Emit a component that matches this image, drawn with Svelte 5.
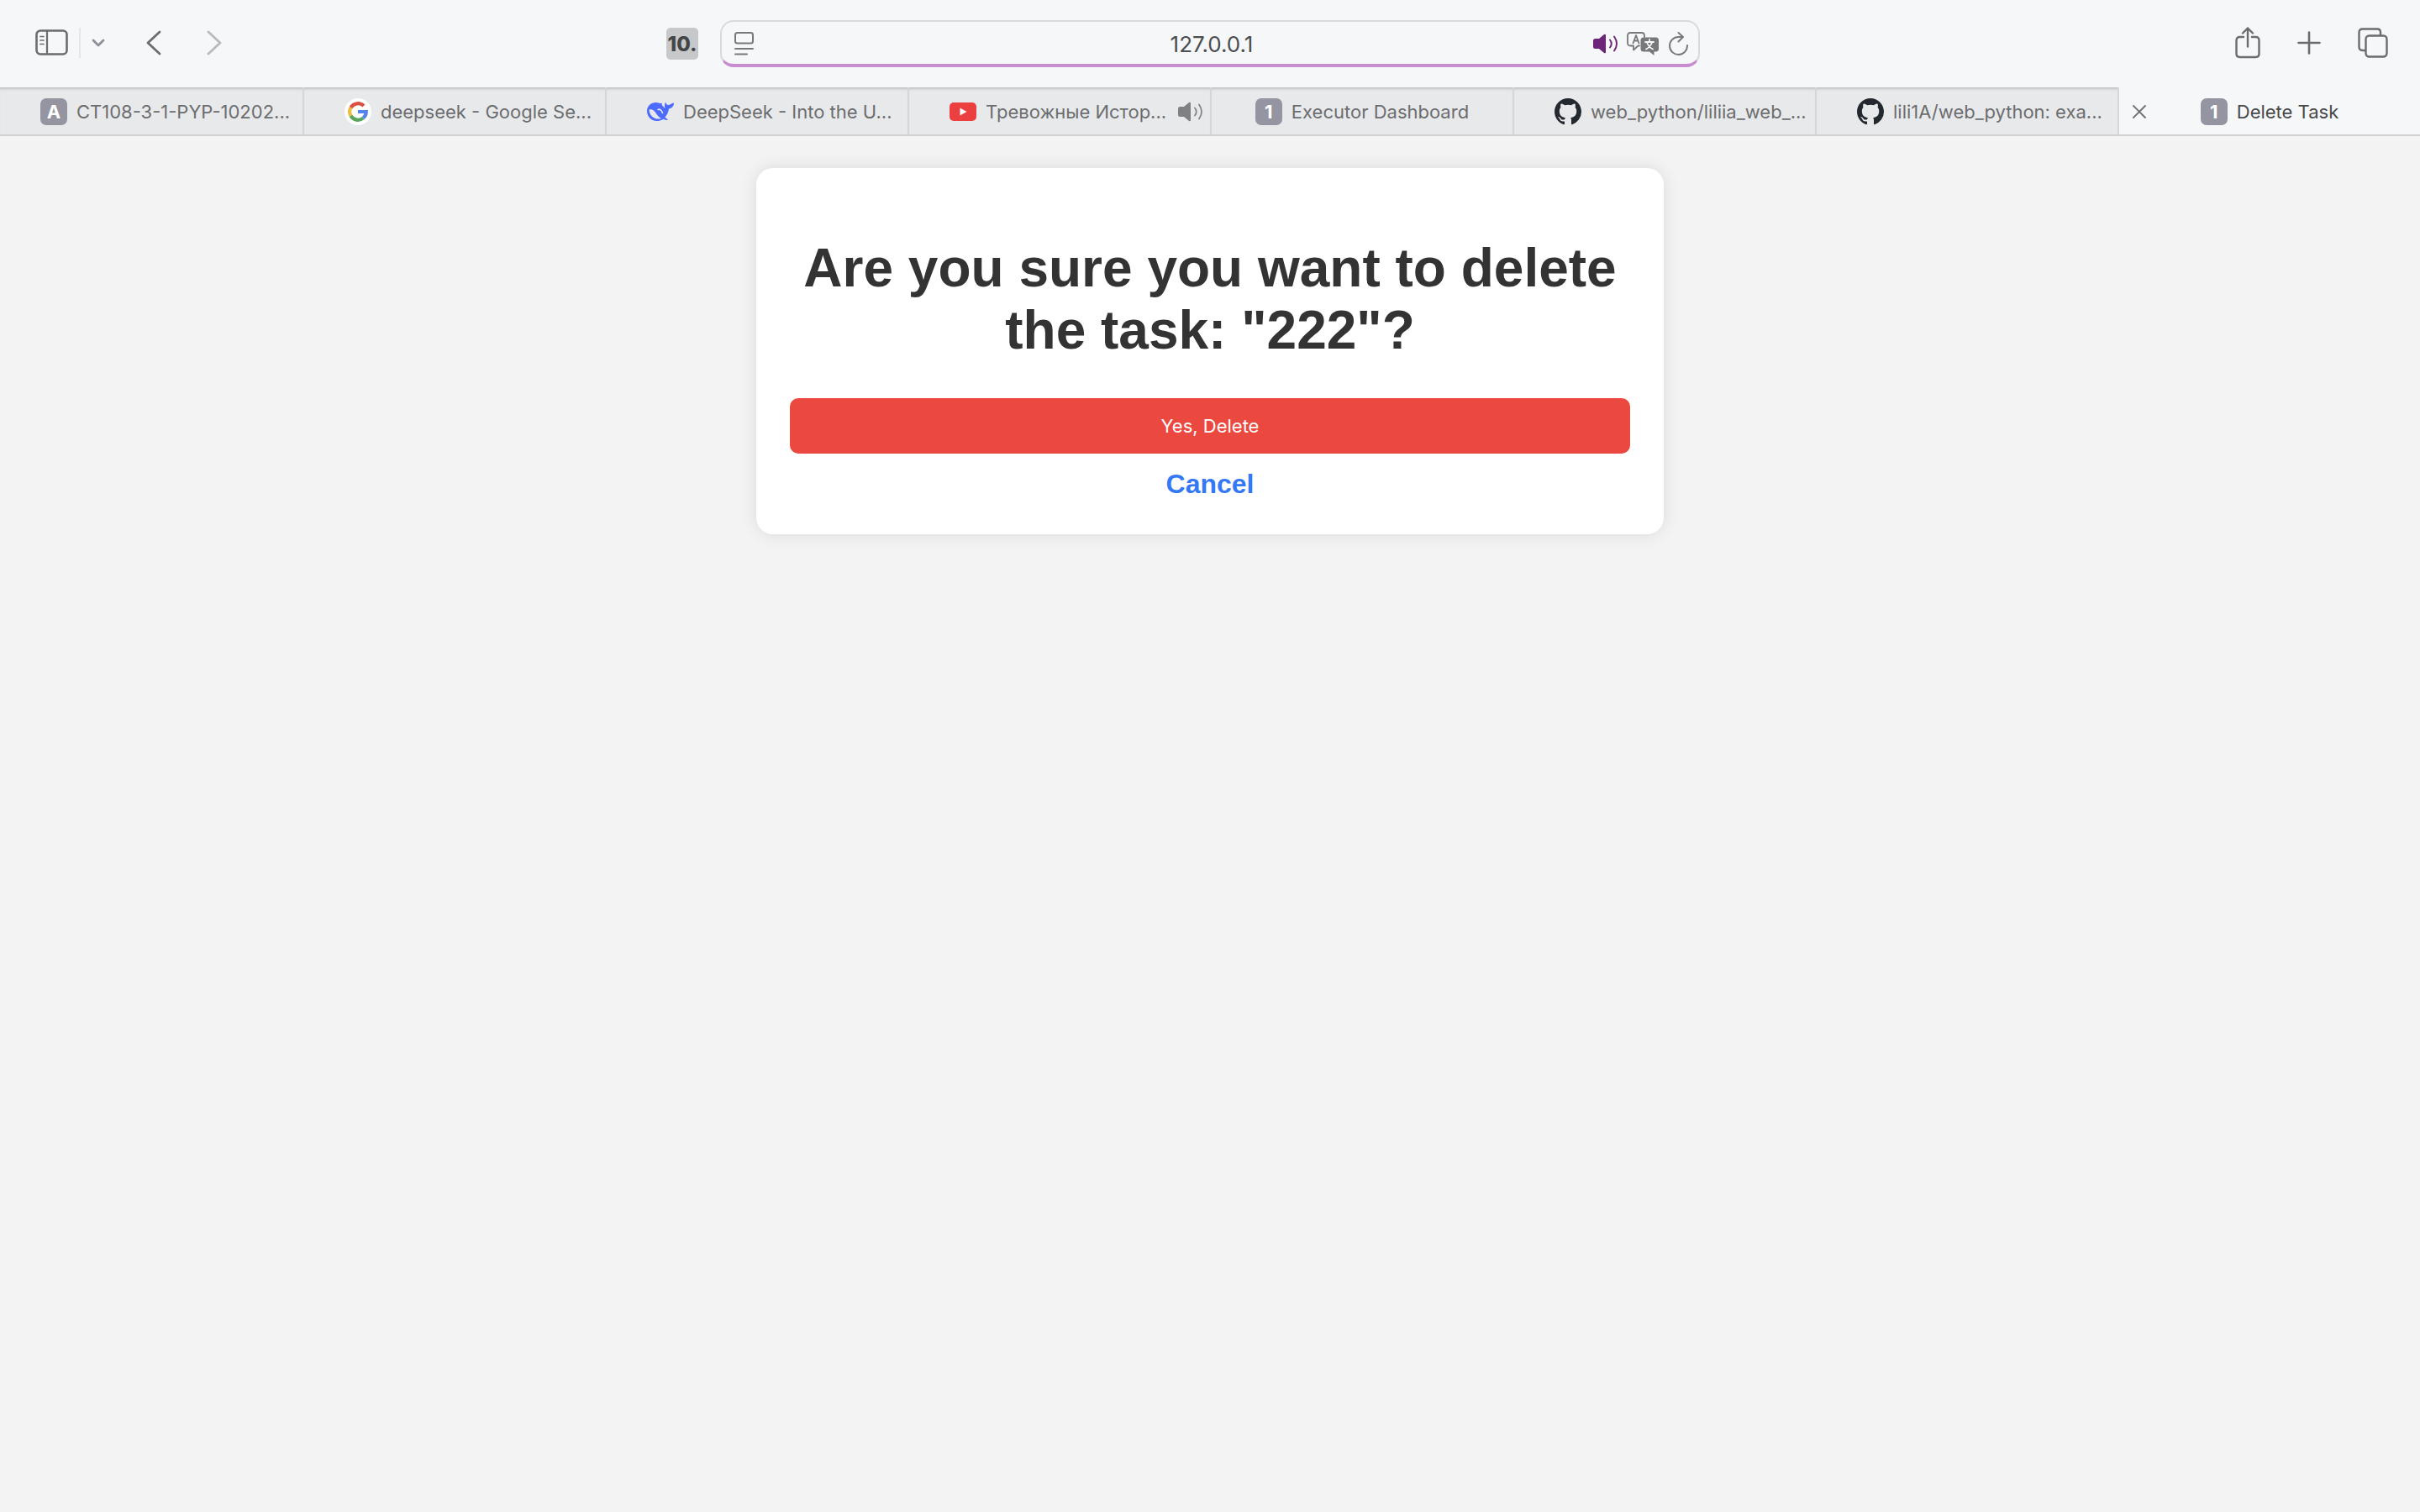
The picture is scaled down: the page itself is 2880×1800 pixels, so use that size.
<script>
  const tabs = [
    { icon: 'letter', letter: 'A', title: 'CT108-3-1-PYP-10202...', long: true },
    { icon: 'google', title: 'deepseek - Google Se...', long: true },
    { icon: 'whale', title: 'DeepSeek - Into the U...', long: true },
    { icon: 'video', title: 'Тревожные Истор...', long: true, audio: true },
    { icon: 'letter', letter: '1', title: 'Executor Dashboard' },
    { icon: 'github', title: 'web_python/liliia_web_...', long: true },
    { icon: 'github', title: 'lili1A/web_python: exa...', long: true },
    { icon: 'letter', letter: '1', title: 'Delete Task', active: true }
  ];
</script>

<header class="toolbar">
  <div class="side left">
    <button class="tool sidebar" aria-label="Show sidebar">
      <svg width="40" height="32" viewBox="0 0 40 32" fill="none" stroke="currentColor" stroke-width="2.6" stroke-linecap="round">
        <rect x="1.5" y="1.5" width="36" height="28" rx="4.5" />
        <path d="M14 2v27" stroke-width="2.2" />
        <path d="M6 8.500h4M6 13h4M6 17.500h4" stroke-width="1.700" />
      </svg>
    </button>
    <span class="rule"></span>
    <button class="tool menu" aria-label="Tab groups">
      <svg width="16" height="12" viewBox="0 0 16 12" fill="none" stroke="currentColor" stroke-width="2.800" stroke-linecap="round" stroke-linejoin="round"><path d="M2 3l6 6 6-6" /></svg>
    </button>
    <button class="tool back" aria-label="Back">
      <svg width="18" height="30" viewBox="0 0 18 30" fill="none" stroke="currentColor" stroke-width="2.800" stroke-linecap="round" stroke-linejoin="round"><path d="M16 2L2 15l14 13" /></svg>
    </button>
    <button class="tool forward" aria-label="Forward">
      <svg width="18" height="30" viewBox="0 0 18 30" fill="none" stroke="currentColor" stroke-width="2.800" stroke-linecap="round" stroke-linejoin="round"><path d="M2 2l14 13L2 28" /></svg>
    </button>
  </div>

  <div class="middle">
    <button class="extension" aria-label="Extension">10.</button>
    <div class="address">
      <button class="tool" aria-label="Page settings">
        <svg width="24" height="28" viewBox="0 0 24 28" fill="none" stroke="#77787a" stroke-width="2" stroke-linecap="round">
          <rect x="1" y="1" width="21" height="12.500" rx="2.500" />
          <path d="M1 20h21M1 26.500h14" />
        </svg>
      </button>
      <input class="url" aria-label="Address" value="127.0.0.1" />
      <button class="tool" aria-label="Mute this tab">
        <svg width="29" height="24" viewBox="0 0 29 24" fill="none" stroke="#6e2478" stroke-width="1.900" stroke-linecap="round">
          <path d="M0 8.500Q0 6 2.500 6H7l6-5Q15 0 15 2v20q0 2-2 1l-6-5H2.500Q0 18 0 15.500z" fill="#6e2478" stroke="none" />
          <path d="M20 7.500q3.500 4.500 0 9M25 3.500q6 8.500 0 17" />
        </svg>
      </button>
      <button class="tool translate" aria-label="Translate">
        <svg width="39" height="29" viewBox="0 0 39 29" fill="none" stroke="#77787a" stroke-width="1.800" stroke-linejoin="round" stroke-linecap="round">
          <path d="M15 16.500h-1.500L8 21.500v-5H4.500Q1 16.500 1 13V4.500Q1 1 4.500 1h13Q21 1 21 4.500V6" />
          <path d="M7.500 13.500L11 4l3.500 9.500M8.500 10.500h5" />
          <path d="M20 6.500h14.500q3.500 0 3.500 3.500v10q0 3.500-3.500 3.500H32.500v4.500L27 23.500h-7q-3.500 0-3.500-3.500V10q0-3.500 3.500-3.500z" fill="#77787a" stroke="none" />
          <path d="M27 9v2M22 12h10M30 12.500q-2 5.500-7 8M24 12.500q2 5.500 7 8" stroke="#f6f7f9" />
        </svg>
      </button>
      <button class="tool" aria-label="Reload">
        <svg width="24" height="28" viewBox="0 0 24 28" fill="none" stroke="#77787a" stroke-width="2" stroke-linecap="round" stroke-linejoin="round">
          <path d="M22 16A10.500 10.500 0 1 1 11.500 6H17M11.500 1l5.500 5-5.500 5.500" />
        </svg>
      </button>
    </div>
  </div>

  <div class="side right">
    <button class="tool" aria-label="Share">
      <svg width="30" height="38" viewBox="0 0 30 38" fill="none" stroke="currentColor" stroke-width="2.400" stroke-linecap="round" stroke-linejoin="round">
        <path d="M10 12H5.500Q1.500 12 1.500 16v16q0 4 4 4h19q4 0 4-4V16q0-4-4-4H20" />
        <path d="M15 23.500V1.500M9 7.500l6-6 6 6" />
      </svg>
    </button>
    <button class="tool" aria-label="New tab">
      <svg width="28" height="28" viewBox="0 0 28 28" fill="none" stroke="currentColor" stroke-width="2.600" stroke-linecap="round"><path d="M14 1.500v25M1.500 14h25" /></svg>
    </button>
    <button class="tool" aria-label="Tab overview">
      <svg width="36" height="36" viewBox="0 0 36 36" fill="none" stroke="currentColor" stroke-width="2.400" stroke-linejoin="round">
        <path d="M9 27H5.500q-4 0-4-4V5.500q0-4 4-4H23q4 0 4 4V9" />
        <rect x="9.500" y="9.500" width="25" height="25" rx="4" />
      </svg>
    </button>
  </div>
</header>

<nav class="tabs" aria-label="Open tabs">
  {#each tabs as tab}
    <div class="tab" class:active={tab.active} class:long={tab.long}>
      {#if tab.active}
        <button class="tool close" aria-label="Close tab">
          <svg width="16" height="16" viewBox="0 0 16 16" fill="none" stroke="currentColor" stroke-width="1.800" stroke-linecap="round"><path d="M1 1l14 14M15 1L1 15" /></svg>
        </button>
      {/if}
      <button class="label">
        {#if tab.icon === 'letter'}
          <span class="badge">{tab.letter}</span>
        {:else if tab.icon === 'google'}
          <svg width="32" height="32" viewBox="0 0 32 32" fill="none" stroke-width="4.200">
            <circle cx="16" cy="16" r="16" fill="#fff" />
            <path d="M22.900 9.100A9.800 9.800 0 0 0 7.500 11.100" stroke="#dc5043" />
            <path d="M7.500 11.100a9.800 9.800 0 0 0 0 9.800" stroke="#f0bb41" />
            <path d="M7.500 20.900a9.800 9.800 0 0 0 14.800 2.600" stroke="#58a65c" />
            <path d="M22.300 23.500A9.800 9.800 0 0 0 25.800 16H16" stroke="#5383ec" />
          </svg>
        {:else if tab.icon === 'whale'}
          <svg width="32" height="24" viewBox="0 0 32 24">
            <path d="M0 11C0 5 5 1 10.500 1c1.500 0 3 .3 4.500 1 1 .5 1.500-.8 2.500 0 .8.700-.3 1.500.5 2.500 1 1.300 2.500 2.300 3.500 3.500C20.500 5 21 2.500 22 .5c.5 2 1.500 3.300 3.300 3.600C27.500 4 29 2 32 1.500c0 4-2.500 6.500-6 7-.5 4.500-2.500 7.500-4.500 10 1 1.500 2.500 2 3.500 3-2 .8-4 .3-5.500-.8C17 22.500 14 23 11.500 23 5 23 0 17.500 0 11z" fill="#4d6bfe" />
            <path d="M2.500 9.500c3.500-1 6 1 8 4s4 5.500 6.500 6.500C10 22.500 2.500 17 2.500 9.500z" fill="#e8e9eb" />
            <path d="M13 9.500c2-1 4.500.5 5.500 4" fill="none" stroke="#e8e9eb" stroke-width="1.600" stroke-linecap="round" />
          </svg>
        {:else if tab.icon === 'video'}
          <svg width="32" height="22" viewBox="0 0 32 22"><rect width="32" height="22" rx="5" fill="#eb403f" /><path d="M12.500 6.500l8 4.500-8 4.500z" fill="#fff" /></svg>
        {:else}
          <svg width="32" height="32" viewBox="0 0 16 16" fill="#24292f"><path d="M8 0C3.580 0 0 3.580 0 8c0 3.540 2.290 6.530 5.470 7.590.4.070.55-.17.55-.38 0-.19-.01-.82-.01-1.490-2.010.37-2.530-.49-2.690-.94-.09-.23-.48-.94-.82-1.130-.28-.15-.68-.52-.01-.53.63-.01 1.080.58 1.230.82.72 1.210 1.870.87 2.330.66.070-.52.28-.87.51-1.070-1.780-.2-3.640-.89-3.640-3.950 0-.87.31-1.590.82-2.150-.08-.2-.36-1.020.08-2.120 0 0 .67-.21 2.200.82.64-.18 1.320-.27 2-.27s1.360.09 2 .27c1.530-1.040 2.200-.82 2.200-.82.44 1.100.16 1.920.08 2.120.51.56.82 1.270.82 2.150 0 3.070-1.870 3.750-3.650 3.950.29.25.54.73.54 1.480 0 1.070-.01 1.930-.01 2.200 0 .21.15.46.55.38A8.010 8.010 0 0 0 16 8c0-4.420-3.580-8-8-8z" /></svg>
        {/if}
        <span>{tab.title}</span>
      </button>
      {#if tab.audio}
        <button class="tool audio" aria-label="Mute tab">
          <svg width="29" height="24" viewBox="0 0 29 24" fill="none" stroke="#808183" stroke-width="1.700" stroke-linecap="round">
            <path d="M0 8.500Q0 6 2.500 6H7l6-5Q15 0 15 2v20q0 2-2 1l-6-5H2.500Q0 18 0 15.500z" fill="#808183" stroke="none" />
            <path d="M20 7.500q3.500 4.500 0 9M25 3.500q6 8.500 0 17" />
          </svg>
        </button>
      {/if}
    </div>
  {/each}
</nav>

<main>
  <form class="card" onsubmit={(event) => event.preventDefault()}>
    <h1>Are you sure you want to delete the task: "222"?</h1>
    <button class="delete" type="submit">Yes, Delete</button>
    <a class="cancel" href="#tasks">Cancel</a>
  </form>
</main>

<style>
  :global(body) {
    background: #f3f3f3;
    font-family: "Liberation Sans", Arial, sans-serif;
  }
  button {
    border: 0;
    padding: 0;
    background: none;
    font-family: Inter, sans-serif;
    color: inherit;
  }
  svg {
    display: block;
    flex: none;
  }
  .toolbar {
    display: grid;
    grid-template-columns: 1fr auto 1fr;
    align-items: center;
    height: 104px;
    background: #f6f7f9;
    color: #6b6c6e;
  }
  .side {
    display: flex;
    align-items: center;
    padding-bottom: 3px;
  }
  .left {
    padding-left: 42px;
  }
  .right {
    justify-content: flex-end;
    gap: 44px;
    padding-right: 38px;
  }
  .rule {
    width: 2px;
    height: 36px;
    margin: 0 13px 0 12px;
    background: #e5e6e8;
  }
  .menu {
    color: #8e8e9a;
  }
  .back {
    margin-left: 49px;
  }
  .forward {
    margin-left: 54px;
    color: #b9babc;
  }
  .middle {
    display: flex;
    align-items: center;
    gap: 26px;
    width: 1230px;
    margin-right: 64px;
  }
  .extension {
    width: 38px;
    height: 38px;
    border-radius: 5px;
    background: #c7c8ca;
    color: #444546;
    font-family: "Liberation Sans Narrow", Inter, sans-serif;
    font-size: 24px;
    font-weight: 800;
  }
  .address {
    display: flex;
    flex: 1;
    align-items: center;
    gap: 11px;
    box-sizing: border-box;
    height: 56px;
    padding: 2px 11px 0 15px;
    border: 2px solid #d9dadc;
    border-bottom: 4px solid #c88dd0;
    border-radius: 16px;
  }
  .url {
    flex: 1;
    min-width: 0;
    padding: 0 0 0 90px;
    border: 0;
    outline: 0;
    background: none;
    color: #4c4d4f;
    font: 26px Inter, sans-serif;
    text-align: center;
  }
  .tabs {
    display: grid;
    grid-template-columns: repeat(8, 1fr);
    height: 56px;
    border-bottom: 2px solid #d0d1d2;
    background: #e8e9eb;
  }
  .tab {
    display: flex;
    align-items: center;
    justify-content: center;
    position: relative;
    min-width: 0;
    padding-top: 2px;
    border-left: 2px solid #d5d6d8;
    box-shadow: inset 0 4px 3px -2px #bfc0c2;
    color: #6c6d6f;
  }
  .tab:first-child {
    border-left: 0;
  }
  .long {
    justify-content: flex-start;
    padding-left: 48px;
  }
  .active {
    background: #f6f7f9;
    box-shadow: none;
    color: #48494b;
  }
  .label {
    display: flex;
    align-items: center;
    gap: 11px;
    font-size: 22px;
    white-space: nowrap;
  }
  .badge {
    width: 32px;
    border-radius: 7px;
    background: #9595a2;
    color: #fff;
    font-size: 22px;
    font-weight: 700;
    line-height: 32px;
    text-align: center;
  }
  .close {
    position: absolute;
    left: 16px;
    color: #6c6d6f;
  }
  .audio {
    margin-left: auto;
    margin-right: 9px;
  }
  main {
    padding: 38px 20px;
  }
  .card {
    box-sizing: border-box;
    max-width: 1080px;
    margin: 0 auto;
    padding: 40px;
    border-radius: 20px;
    background: #fff;
    box-shadow: 0 0 20px rgb(0 0 0 / 10%);
    text-align: center;
  }
  h1 {
    margin: 42px 0 44px;
    color: #333;
    font-size: 64px;
    line-height: 74px;
  }
  .delete {
    display: block;
    width: 100%;
    height: 66px;
    border-radius: 10px;
    background: #eb4840;
    color: #fff;
    font-size: 22px;
  }
  .cancel {
    display: block;
    width: fit-content;
    margin: 18px auto 0;
    padding-bottom: 2px;
    color: #3478f6;
    font-size: 32px;
    font-weight: 700;
    line-height: 36px;
    text-decoration: none;
  }
</style>
